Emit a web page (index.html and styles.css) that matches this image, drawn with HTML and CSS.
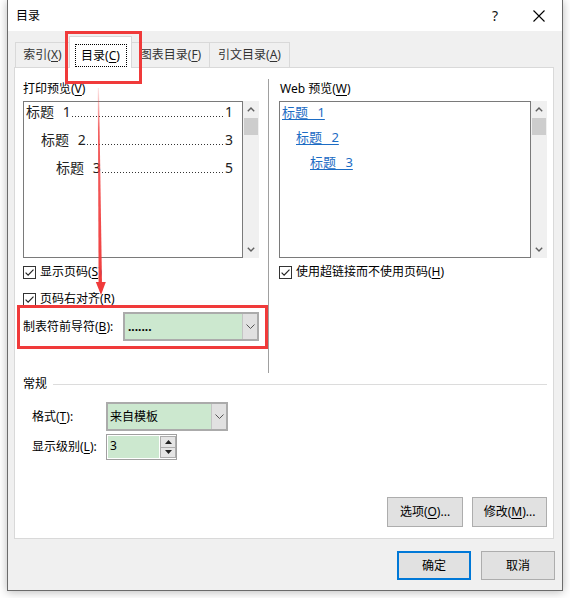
FILE: index.html
```html
<!DOCTYPE html>
<html lang="zh-CN">
<head>
<meta charset="utf-8">
<title>目录</title>
<link rel="stylesheet" href="styles.css">
</head>
<body>
<div class="window">
  <div class="titlebar">
    <span class="title">目录</span>
    <span class="help">?</span>
    <span class="close"><svg width="12" height="12" viewBox="0 0 12 12"><path d="M0.5 0.5L11.5 11.5M11.5 0.5L0.5 11.5" stroke="#000" stroke-width="1.1" fill="none"/></svg></span>
  </div>
  <div class="client">
    <div class="tabs">
      <div class="tab w1">索引(<u>X</u>)</div>
      <div class="tab active"><span class="focus">目录(<u>C</u>)</span></div>
      <div class="tab w3">图表目录(<u>F</u>)</div>
      <div class="tab w4">引文目录(<u>A</u>)</div>
    </div>
    <div class="panel">
      <div class="top">
        <div class="col col-left">
          <div class="label">打印预览(<u>V</u>)</div>
          <div class="preview">
            <div class="list">
              <div class="toc lv1"><span class="name">标题 1</span><span class="dots"></span><span class="pg">1</span></div>
              <div class="toc lv2"><span class="name">标题 2</span><span class="dots"></span><span class="pg">3</span></div>
              <div class="toc lv3"><span class="name">标题 3</span><span class="dots"></span><span class="pg">5</span></div>
            </div>
            <div class="vscroll">
              <span class="sb-btn"><svg width="8" height="5" viewBox="0 0 8 5"><path d="M0.8 4.2L4 1L7.2 4.2" stroke="#606060" stroke-width="1.4" fill="none"/></svg></span>
              <span class="thumb"></span>
              <span class="sb-btn down"><svg width="8" height="5" viewBox="0 0 8 5"><path d="M0.8 0.8L4 4L7.2 0.8" stroke="#606060" stroke-width="1.4" fill="none"/></svg></span>
            </div>
          </div>
          <div class="check c1"><svg width="13" height="13" viewBox="0 0 13 13"><rect x="0.5" y="0.5" width="12" height="12" fill="#fff" stroke="#333"/><path d="M2.6 6.6L5.1 9.1L10.5 3.6" stroke="#222" stroke-width="1.2" fill="none"/></svg><span>显示页码(<u>S</u>)</span></div>
          <div class="check c2"><svg width="13" height="13" viewBox="0 0 13 13"><rect x="0.5" y="0.5" width="12" height="12" fill="#fff" stroke="#333"/><path d="M2.6 6.6L5.1 9.1L10.5 3.6" stroke="#222" stroke-width="1.2" fill="none"/></svg><span>页码右对齐(<u>R</u>)</span></div>
          <div class="leader-row">
            <span class="leader-label">制表符前导符(<u>B</u>):</span>
            <div class="combo leader-combo"><span class="combo-value dotsval">.......</span><span class="combo-btn"><svg width="9" height="5" viewBox="0 0 9 5"><path d="M0.5 0.5L4.5 4.5L8.5 0.5" stroke="#555" stroke-width="1" fill="none"/></svg></span></div>
          </div>
        </div>
        <div class="divider"></div>
        <div class="col col-right">
          <div class="label">Web 预览(<u>W</u>)</div>
          <div class="preview">
            <div class="list web">
              <div class="wl lv1"><span class="link">标题 1</span></div>
              <div class="wl wl2"><span class="link">标题 2</span></div>
              <div class="wl wl3"><span class="link">标题 3</span></div>
            </div>
            <div class="vscroll">
              <span class="sb-btn"><svg width="8" height="5" viewBox="0 0 8 5"><path d="M0.8 4.2L4 1L7.2 4.2" stroke="#606060" stroke-width="1.4" fill="none"/></svg></span>
              <span class="thumb"></span>
              <span class="sb-btn down"><svg width="8" height="5" viewBox="0 0 8 5"><path d="M0.8 0.8L4 4L7.2 0.8" stroke="#606060" stroke-width="1.4" fill="none"/></svg></span>
            </div>
          </div>
          <div class="check c1"><svg width="13" height="13" viewBox="0 0 13 13"><rect x="0.5" y="0.5" width="12" height="12" fill="#fff" stroke="#333"/><path d="M2.6 6.6L5.1 9.1L10.5 3.6" stroke="#222" stroke-width="1.2" fill="none"/></svg><span>使用超链接而不使用页码(<u>H</u>)</span></div>
        </div>
      </div>
      <div class="group"><span>常规</span><span class="rule"></span></div>
      <div class="field f-format">
        <span class="flabel">格式(<u>T</u>):</span>
        <div class="combo format-combo"><span class="combo-value">来自模板</span><span class="combo-btn"><svg width="9" height="5" viewBox="0 0 9 5"><path d="M0.5 0.5L4.5 4.5L8.5 0.5" stroke="#555" stroke-width="1" fill="none"/></svg></span></div>
      </div>
      <div class="field f-level">
        <span class="flabel">显示级别(<u>L</u>):</span>
        <div class="spin">
          <span class="spin-value">3</span>
          <span class="spin-btns">
            <span class="spin-up"><svg width="7" height="4" viewBox="0 0 7 4"><path d="M0 4L3.5 0L7 4Z" fill="#222"/></svg></span>
            <span class="spin-down"><svg width="7" height="4" viewBox="0 0 7 4"><path d="M0 0L3.5 4L7 0Z" fill="#222"/></svg></span>
          </span>
        </div>
      </div>
      <div class="panel-buttons">
        <button class="btn opt">选项(<u>O</u>)...</button>
        <button class="btn mod">修改(<u>M</u>)...</button>
      </div>
    </div>
    <div class="dialog-buttons">
      <button class="btn ok">确定</button>
      <button class="btn cancel">取消</button>
    </div>
  </div>
</div>
<svg class="arrow" width="570" height="598" viewBox="0 0 570 598">
  <defs>
    <linearGradient id="ag" x1="0" y1="88" x2="0" y2="296" gradientUnits="userSpaceOnUse">
      <stop offset="0" stop-color="#f03a3a" stop-opacity="0.12"/>
      <stop offset="0.2" stop-color="#f03a3a" stop-opacity="0.8"/>
      <stop offset="1" stop-color="#f03a3a" stop-opacity="1"/>
    </linearGradient>
  </defs>
  <polygon points="97.8,88 99,88 102,284 98.6,284" fill="url(#ag)"/>
  <polygon points="95.8,282 105.8,282 101,295" fill="#f03a3a"/>
</svg>
</body>
</html>
```
FILE: styles.css
```css
* { box-sizing: border-box; }
html, body { margin: 0; padding: 0; background: #fff; }
body {
  position: relative;
  width: 570px;
  height: 598px;
  overflow: hidden;
  font-family: "Noto Sans", "Noto Sans CJK SC", sans-serif;
  font-size: 12px;
  color: #000;
}
u { text-decoration: underline; text-underline-offset: 2px; }

.window {
  margin-left: 7px;
  width: 556px;
  height: 591px;
  border: 1px solid #6b6b6b;
  border-top: 0;
  background: #f0f0f0;
  box-shadow: 0 1px 9px rgba(0, 0, 0, 0.28);
  display: flex;
  flex-direction: column;
}

.titlebar {
  height: 31px;
  flex: none;
  background: #fff;
  display: flex;
  align-items: center;
  padding-left: 8px;
}
.title { font-size: 12px; line-height: 16px; }
.help {
  margin-left: auto;
  width: 46px;
  text-align: center;
  padding-left: 4px;
  font-size: 14px;
  line-height: 16px;
  color: #111;
}
.close { width: 46px; display: flex; justify-content: center; align-items: center; }

.client {
  flex: 1;
  display: flex;
  flex-direction: column;
  padding: 0 8px 0 6px;
}

/* tabs */
.tabs {
  height: 36px;
  flex: none;
  display: flex;
  align-items: flex-end;
  padding-left: 1px;
}
.tab {
  height: 25px;
  border: 1px solid #d9d9d9;
  border-bottom: 0;
  background: #f0f0f0;
  margin-left: -1px;
  display: flex;
  justify-content: center;
  align-items: flex-start;
  padding-top: 4px;
  line-height: 16px;
  color: #333;
  white-space: nowrap;
}
.tab.w1 { margin-left: 0; width: 55px; }
.tab.w3 { width: 79px; }
.tab.w4 { width: 81px; }
.tab.active {
  width: 63px;
  height: 32px;
  background: #fff;
  margin-bottom: -1px;
  position: relative;
  z-index: 1;
  padding-top: 7px;
  color: #000;
}
.tab.active::after {
  content: "";
  position: absolute;
  left: -5px;
  top: -6px;
  width: 71px;
  height: 47px;
  border: 3px solid #f03a3a;
}
.focus {
  display: block;
  width: 52px;
  height: 23px;
  line-height: 21px;
  text-align: center;
  border: 1px dotted #000;
}

/* panel */
.panel {
  height: 472px;
  flex: none;
  border: 1px solid #d9d9d9;
  background: #fff;
  display: flex;
  flex-direction: column;
  padding: 0 6px 11px 8px;
}
.top {
  display: flex;
  margin-top: 11px;
  height: 294px;
  flex: none;
}
.col-left { width: 236px; flex: none; display: flex; flex-direction: column; }
.col-right { flex: 1; display: flex; flex-direction: column; }
.divider { width: 1px; flex: none; background: #a0a0a0; margin: 0 10px 0 9px; }

.label {
  margin-top: 1px;
  height: 18px;
  line-height: 18px;
  margin-bottom: 3px;
  white-space: nowrap;
}
.col-right .label { padding-left: 1px; }

.preview { display: flex; height: 157px; flex: none; }
.list { flex: 1; border: 1px solid #7a7a7a; background: #fff; overflow: hidden; }
.vscroll {
  width: 16px;
  flex: none;
  background: #f0f0f0;
  display: flex;
  flex-direction: column;
  align-items: center;
}
.sb-btn { width: 16px; height: 17px; display: flex; align-items: center; justify-content: center; }
.sb-btn.down { margin-top: auto; }
.thumb { width: 14px; height: 17px; background: #cdcdcd; }

.toc {
  display: flex;
  height: 20px;
  line-height: 20px;
  font-size: 14px;
  color: #222;
  margin-bottom: 8px;
  padding-right: 9px;
  white-space: nowrap;
}
.toc .name { word-spacing: 5px; }
.toc.lv1 { padding-left: 2px; }
.toc.lv2 { padding-left: 17px; }
.toc.lv3 { padding-left: 32px; }
.dots {
  flex: 1;
  height: 1px;
  align-self: flex-end;
  margin: 0 1px 5px 1px;
  background: repeating-linear-gradient(to right, #333 0 1px, transparent 1px 3px);
}

.wl {
  height: 20px;
  line-height: 20px;
  font-size: 13px;
  margin-bottom: 5px;
  color: #1c6cc4;
  white-space: nowrap;
  padding-left: 2px;
}
.wl.wl2 { padding-left: 16px; }
.wl.wl3 { padding-left: 30px; }
.link { text-decoration: underline; text-underline-offset: 2px; word-spacing: 6px; }

.check {
  display: flex;
  align-items: center;
  height: 18px;
  line-height: 18px;
  white-space: nowrap;
  margin-top: 5px;
  flex: none;
}
.check svg { flex: none; margin-right: 4px; }
.check.c2 { margin-top: 9px; }

.leader-row {
  margin: -3px -9px 0 -6px;
  height: 44px;
  flex: none;
  border: 3px solid #f03a3a;
  padding: 4px 0 5px 3px;
  display: flex;
  align-items: center;
}
.leader-label { width: 100px; flex: none; line-height: 18px; white-space: nowrap; }

.combo {
  display: flex;
  height: 29px;
  flex: none;
  border: 2px solid #ababab;
  background: #cce8cf;
}
.leader-combo { width: 136px; }
.combo-value { flex: 1; padding-left: 2px; line-height: 25px; white-space: nowrap; }
.dotsval { padding-left: 3px; font-weight: bold; }
.combo-btn {
  width: 15px;
  flex: none;
  background: #e1e1e1;
  border-left: 1px solid #c4c4c4;
  display: flex;
  align-items: center;
  justify-content: center;
}

.group {
  display: flex;
  align-items: center;
  margin-top: 3px;
  height: 16px;
  line-height: 16px;
  flex: none;
  white-space: nowrap;
}
.rule { flex: 1; height: 1px; background: #dcdcdc; margin-left: 6px; }

.field { display: flex; align-items: center; padding-left: 9px; flex: none; }
.f-format { margin-top: 10px; height: 29px; }
.f-level { margin-top: 3px; height: 26px; }
.flabel { width: 74px; flex: none; line-height: 18px; white-space: nowrap; }
.format-combo { width: 122px; }

.spin {
  width: 71px;
  height: 26px;
  border: 1px solid #a0a0a0;
  padding: 1px 0 1px 1px;
  display: flex;
  gap: 1px;
  background: #fff;
}
.spin-value { flex: 1; background: #cce8cf; line-height: 20px; padding-left: 2px; }
.spin-btns { width: 16px; flex: none; display: flex; flex-direction: column; }
.spin-up, .spin-down {
  flex: 1;
  background: #e5e5e5;
  border: 1px solid #adadad;
  display: flex;
  align-items: center;
  justify-content: center;
}
.spin-down { border-top: 0; }

.panel-buttons {
  margin-top: auto;
  display: flex;
  justify-content: flex-end;
  gap: 9px;
  flex: none;
}
.btn {
  height: 30px;
  border: 1px solid #adadad;
  background: #e1e1e1;
  font: inherit;
  font-size: 12px;
  color: #000;
  padding: 0;
  line-height: 26px;
  white-space: nowrap;
}
.opt { width: 76px; }
.mod { width: 75px; }

.dialog-buttons {
  display: flex;
  justify-content: flex-end;
  gap: 10px;
  margin: 12px -1px 0 0;
  flex: none;
}
.ok, .cancel { width: 74px; height: 29px; }
.ok { border: 2px solid #0078d7; }

.arrow { position: absolute; left: 0; top: 0; pointer-events: none; }
```
